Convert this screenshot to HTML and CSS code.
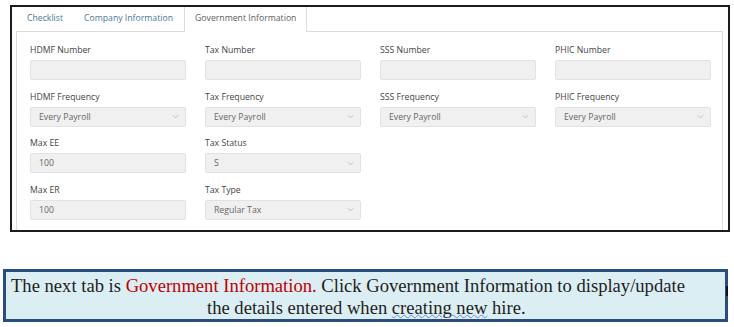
FILE: index.html
```html
<!DOCTYPE html>
<html>
<head>
<meta charset="utf-8">
<link rel="stylesheet" href="styles.css">
</head>
<body>
<div class="shot">
  <div class="tabs">
    <div class="tab">Checklist</div>
    <div class="tab">Company Information</div>
    <div class="tab active">Government Information</div>
  </div>
  <div class="panel">
    <div class="grid">
      <div class="field"><div class="label">HDMF Number</div><div class="input"></div></div>
      <div class="field"><div class="label">Tax Number</div><div class="input"></div></div>
      <div class="field"><div class="label">SSS Number</div><div class="input"></div></div>
      <div class="field"><div class="label">PHIC Number</div><div class="input"></div></div>

      <div class="field"><div class="label">HDMF Frequency</div><div class="input select"><span>Every Payroll</span><svg class="chev" viewBox="0 0 8 5"><path d="M1 1l3 3 3-3" /></svg></div></div>
      <div class="field"><div class="label">Tax Frequency</div><div class="input select"><span>Every Payroll</span><svg class="chev" viewBox="0 0 8 5"><path d="M1 1l3 3 3-3" /></svg></div></div>
      <div class="field"><div class="label">SSS Frequency</div><div class="input select"><span>Every Payroll</span><svg class="chev" viewBox="0 0 8 5"><path d="M1 1l3 3 3-3" /></svg></div></div>
      <div class="field"><div class="label">PHIC Frequency</div><div class="input select"><span>Every Payroll</span><svg class="chev" viewBox="0 0 8 5"><path d="M1 1l3 3 3-3" /></svg></div></div>

      <div class="field"><div class="label">Max EE</div><div class="input"><span>100</span></div></div>
      <div class="field"><div class="label">Tax Status</div><div class="input select"><span>S</span><svg class="chev" viewBox="0 0 8 5"><path d="M1 1l3 3 3-3" /></svg></div></div>
      <div class="field empty"></div>
      <div class="field empty"></div>

      <div class="field"><div class="label">Max ER</div><div class="input"><span>100</span></div></div>
      <div class="field"><div class="label">Tax Type</div><div class="input select"><span>Regular Tax</span><svg class="chev" viewBox="0 0 8 5"><path d="M1 1l3 3 3-3" /></svg></div></div>
    </div>
  </div>
</div>

<div class="note">
  <div class="line1">The next tab is <span class="red">Government Information.</span> Click Government Information to display/update</div>
  <div class="line2">the details entered when <span class="spell">creating new</span> hire.</div>
  <div class="caret"></div>
</div>
</body>
</html>
```

FILE: styles.css
```css
html, body {
  margin: 0;
  padding: 0;
  background: #ffffff;
}

body {
  font-family: "Open Sans", "Noto Sans", sans-serif;
  width: 734px;
  height: 327px;
  overflow: hidden;
}

.shot {
  box-sizing: border-box;
  margin: 5px 0 0 10px;
  width: 720px;
  height: 227px;
  border: 2px solid #1c1c1c;
  padding: 0 5px 0 4px;
  overflow: hidden;
}

.tabs {
  display: flex;
  height: 24px;
}

.tab {
  box-sizing: border-box;
  padding: 0 10px 0 11px;
  font-size: 8.7px;
  line-height: 22px;
  color: #4a7896;
  height: 24px;
}

.tab.active {
  border: 1px solid #dcdcdc;
  border-top: none;
  border-bottom: none;
  background: #fff;
  color: #606060;
  padding: 0 10px 0 10px;
  margin-left: 1px;
  margin-bottom: -1px;
  height: 25px;
  position: relative;
  z-index: 1;
}

.panel {
  border: 1px solid #dcdcdc;
  border-bottom: none;
  padding: 11px 13px 20px 13px;
  height: 220px;
}

.grid {
  display: grid;
  grid-template-columns: repeat(4, 156px);
  column-gap: 19px;
  row-gap: 9.5px;
}

.label {
  font-size: 8.7px;
  line-height: 14px;
  color: #444;
  margin-bottom: 3px;
  white-space: nowrap;
}

.input {
  box-sizing: border-box;
  height: 20px;
  background: #f0f0f0;
  border: 1px solid #e2e2e2;
  border-radius: 2px;
  display: flex;
  align-items: center;
  justify-content: space-between;
  padding: 0 6px 0 8px;
  font-size: 8.7px;
  color: #666;
}

.chev {
  width: 7px;
  height: 5px;
  fill: none;
  stroke: #b8b8b8;
  stroke-width: 1;
}

.field.empty {
  height: 37px;
}

.note {
  box-sizing: border-box;
  position: relative;
  margin: 37px 0 0 3px;
  width: 725px;
  height: 53px;
  border: 3px solid #284e7f;
  background: #dbeef4;
  font-family: "Liberation Serif", "Times New Roman", serif;
  font-size: 18.6px;
  line-height: 22px;
  color: #1e1e1e;
  padding-top: 3px;
}

.line1 {
  padding-left: 5px;
  white-space: nowrap;
}

.line2 {
  padding-left: 201px;
  white-space: nowrap;
}

.red {
  color: #c00000;
}

.spell {
  text-decoration: underline wavy #6d8fe0;
  text-decoration-thickness: 1px;
  text-underline-offset: 0px;
}

.caret {
  position: absolute;
  right: -3px;
  top: 14px;
  width: 2px;
  height: 10px;
  background: #111;
}
```
